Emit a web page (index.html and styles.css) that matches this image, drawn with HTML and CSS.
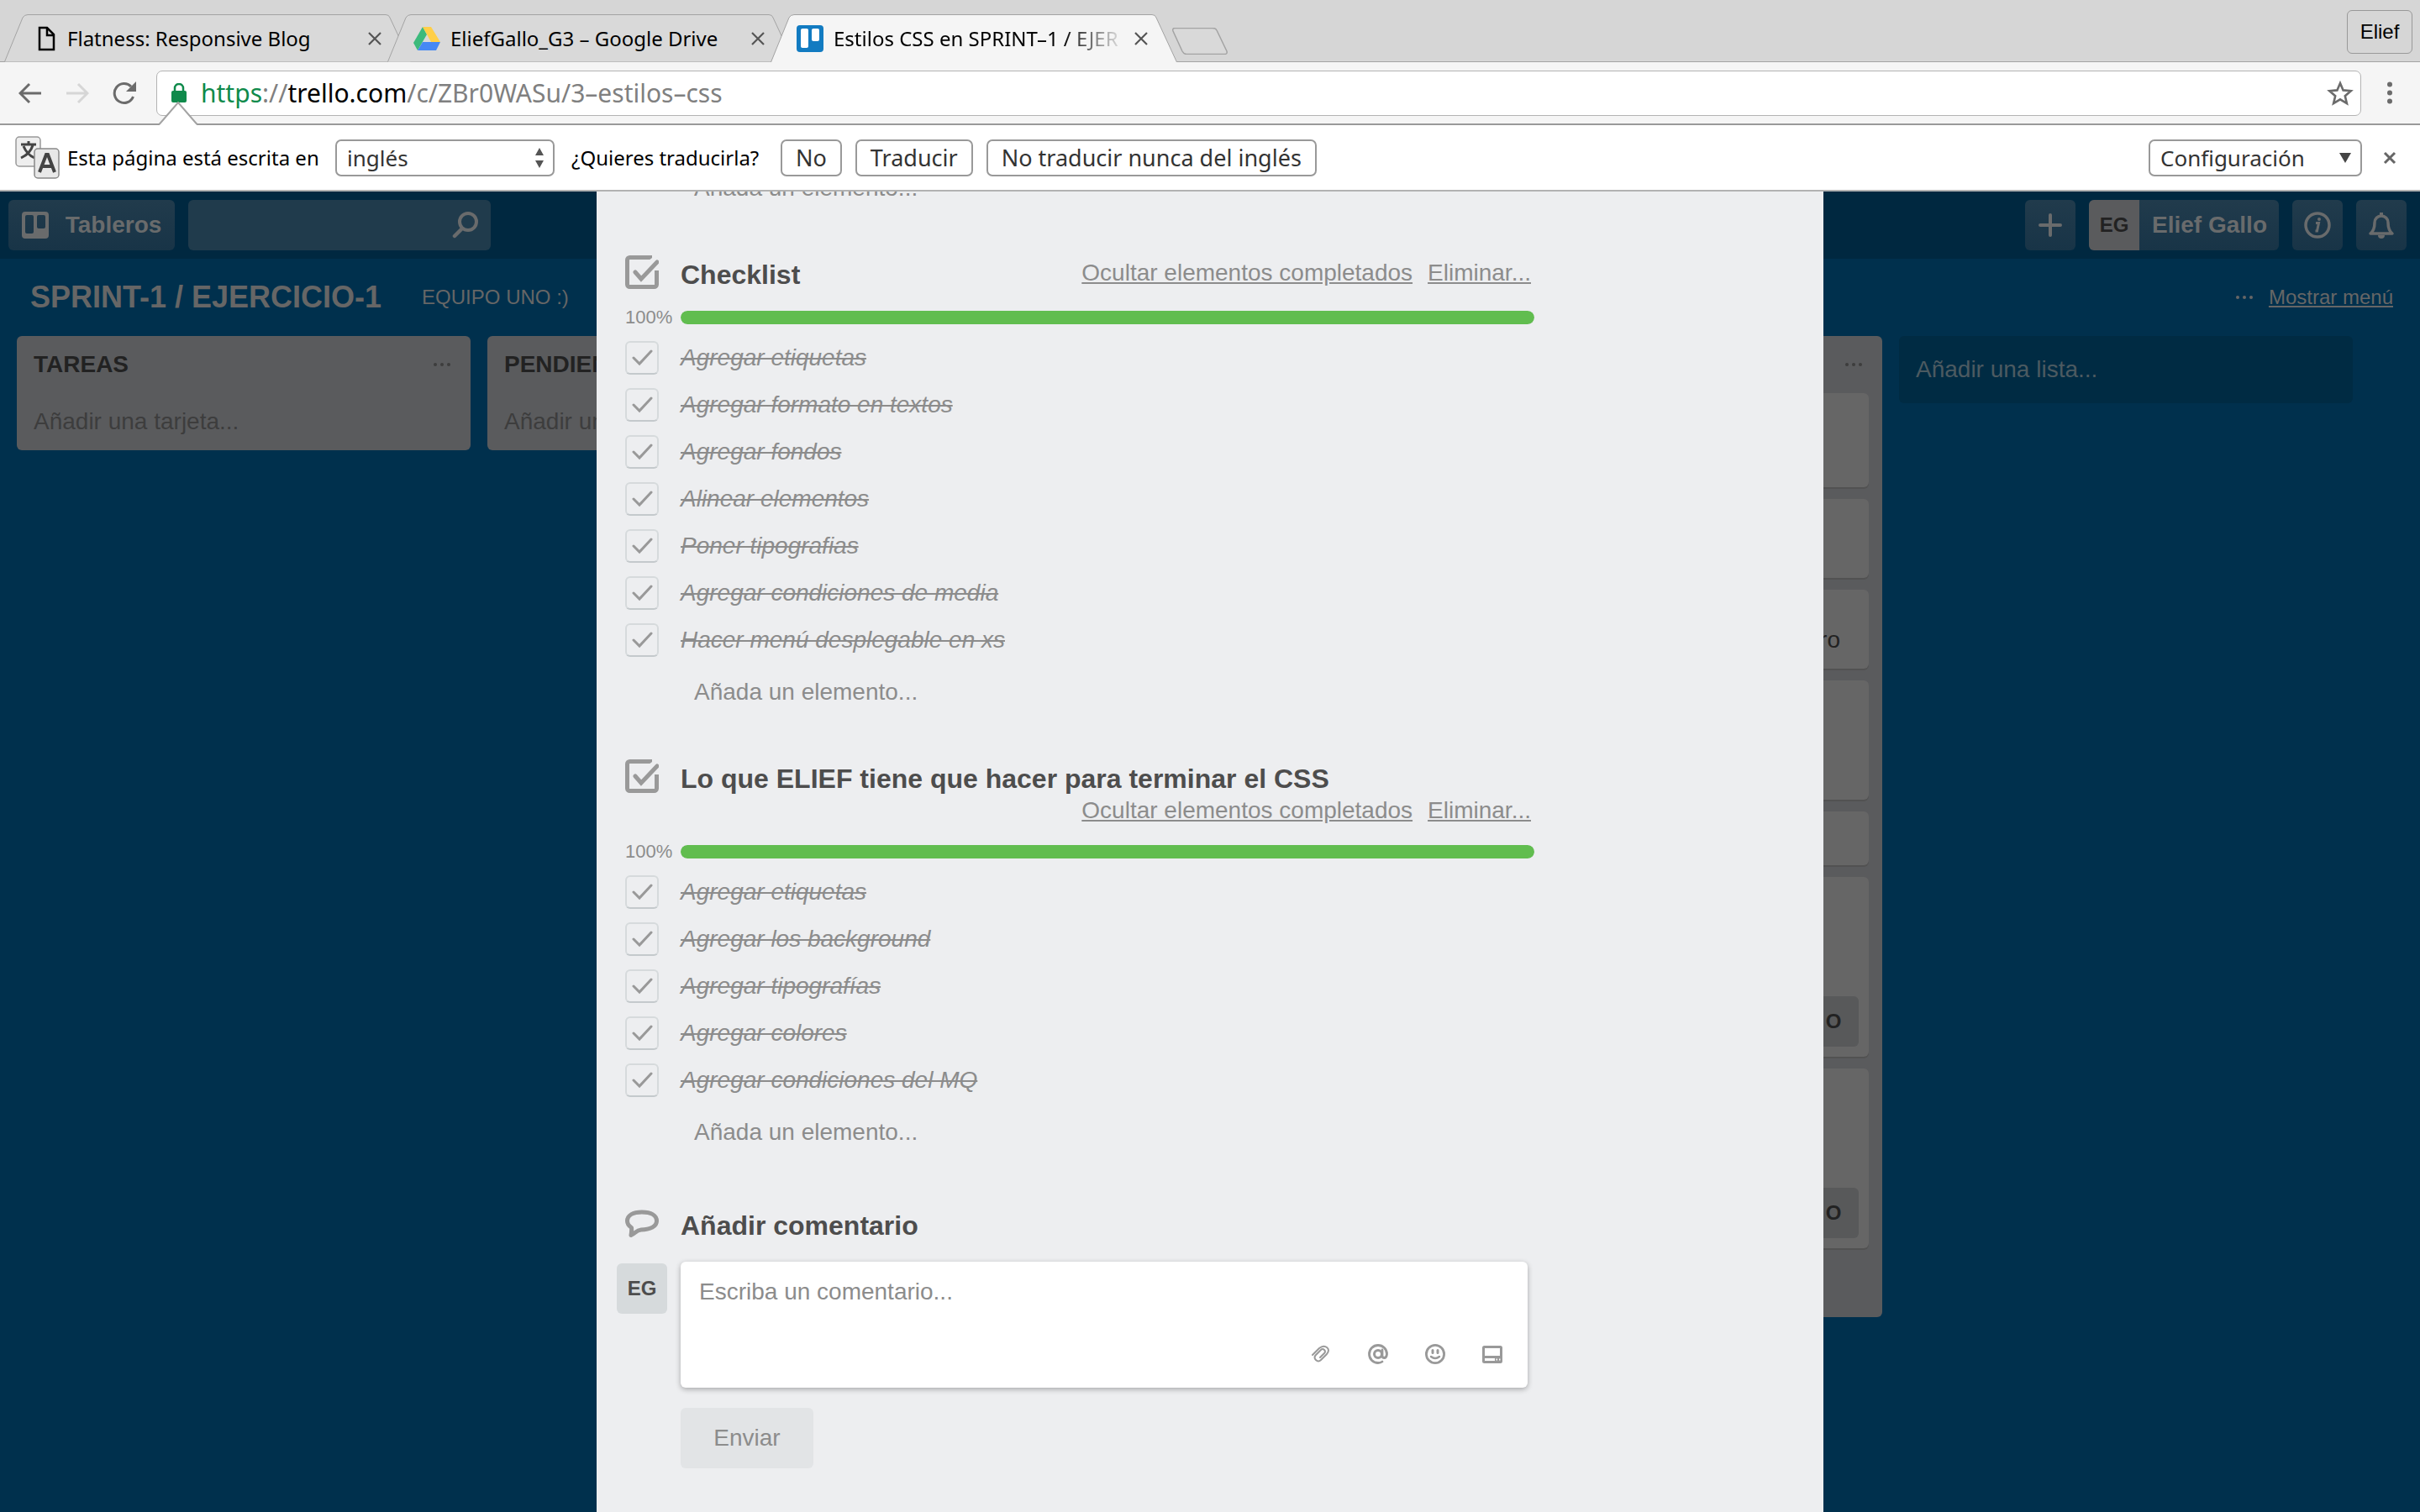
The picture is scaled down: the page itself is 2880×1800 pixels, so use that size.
FILE: index.html
```html
<!DOCTYPE html>
<html lang="es">
<head>
<meta charset="utf-8">
<title>Estilos CSS en SPRINT-1 / EJERCICIO-1</title>
<link rel="stylesheet" href="styles.css">
</head>
<body>
<div class="browser">

  <header class="tabstrip">
    <div class="tabs">
      <div class="tab">
        <svg class="tab__shape" viewBox="0 0 484 57" preserveAspectRatio="none"><path d="M.5 56.500L22 4Q24 .5 28 .5H454Q458 .5 459 4L483.500 56.500" fill="#d9d9d9" stroke="#a3a3a3"/></svg>
        <svg class="tab__icon" viewBox="0 0 32 32"><path d="M12 3h9l8 8v18H12zM21 3v9h8" transform="translate(-1 0)" fill="none" stroke="#000" stroke-width="2.500"/></svg>
        <span class="tab__title">Flatness: Responsive Blog</span>
        <button class="tab__close" aria-label="Cerrar"><svg viewBox="0 0 18 18"><path d="M2 2l14 14M16 2L2 16" stroke="#555" stroke-width="2.200"/></svg></button>
      </div>
      <div class="tab">
        <svg class="tab__shape" viewBox="0 0 484 57" preserveAspectRatio="none"><path d="M.5 56.500L22 4Q24 .5 28 .5H454Q458 .5 459 4L483.500 56.500" fill="#d9d9d9" stroke="#a3a3a3"/></svg>
        <svg class="tab__icon" viewBox="0 0 32 32"><path d="M11 2L0 21l5 9L16 11z" fill="#3cba7c"/><path d="M11 2h10l11 18H21z" fill="#ffcf48"/><path d="M5 30l6-10h21l-5 10z" fill="#4688f4"/></svg>
        <span class="tab__title">EliefGallo_G3 – Google Drive</span>
        <button class="tab__close" aria-label="Cerrar"><svg viewBox="0 0 18 18"><path d="M2 2l14 14M16 2L2 16" stroke="#555" stroke-width="2.200"/></svg></button>
      </div>
      <div class="tab tab--active">
        <svg class="tab__shape" viewBox="0 0 484 57" preserveAspectRatio="none"><path d="M.5 57L22 4Q24 .5 28 .5H454Q458 .5 459 4L483.500 57" fill="#f5f5f5" stroke="#a3a3a3"/></svg>
        <svg class="tab__icon" viewBox="0 0 32 32"><rect width="32" height="32" rx="4" fill="#127bc1"/><rect x="5" y="4" width="9" height="23" rx="2" fill="#fff"/><rect x="18" y="4" width="9" height="15" rx="2" fill="#fff"/></svg>
        <span class="tab__title tab__title--fade">Estilos CSS en SPRINT–1 / EJER</span>
        <button class="tab__close" aria-label="Cerrar"><svg viewBox="0 0 18 18"><path d="M2 2l14 14M16 2L2 16" stroke="#555" stroke-width="2.200"/></svg></button>
      </div>
      <button class="newtab" aria-label="Nueva pestaña"><svg viewBox="0 0 66 32"><path d="M3 .5H48Q52 .5 53 3L65 28Q66 31.500 62 31.500H17Q14 31.500 12 28L1 4Q0 .5 3 .5z" fill="#d9d9d9" stroke="#a3a3a3" stroke-width="1.500"/></svg></button>
    </div>
    <button class="profile">Elief</button>
  </header>

  <nav class="toolbar">
    <button class="nav" aria-label="Atrás"><svg viewBox="0 0 28 28"><path d="M27 14H3M13 3L2 14l11 11" fill="none" stroke="#6b6b6b" stroke-width="3"/></svg></button>
    <button class="nav" aria-label="Adelante"><svg viewBox="0 0 28 28"><path d="M1 14h24M15 3l11 11-11 11" fill="none" stroke="#d6d6d6" stroke-width="3"/></svg></button>
    <button class="nav" aria-label="Recargar"><svg viewBox="0 0 28 28"><path d="M24.500 18A11.500 11.500 0 1 1 22 6" fill="none" stroke="#6b6b6b" stroke-width="3"/><path d="M28 0v12H16z" fill="#6b6b6b"/></svg></button>
    <div class="omnibox">
      <svg class="omnibox__lock" viewBox="0 0 18 24"><rect y="9" width="18" height="14" rx="2" fill="#0f8a4b"/><path d="M4 10V6a5 5 0 0 1 10 0v4" fill="none" stroke="#0f8a4b" stroke-width="2.500"/></svg>
      <span class="omnibox__url"><span class="url-scheme">https</span>://<span class="url-host">trello.com</span>/c/ZBr0WASu/3–estilos–css</span>
      <button class="omnibox__star" aria-label="Marcador"><svg viewBox="0 0 32 32"><path d="M16 4l3.600 8.400 9.100.8-6.900 6 2.100 8.900L16 23.300 8.100 28.100l2.100-8.900-6.900-6 9.100-.8z" fill="none" stroke="#6b6b6b" stroke-width="2.600"/></svg></button>
    </div>
    <button class="nav" aria-label="Menú"><svg viewBox="0 0 28 28"><g fill="#6b6b6b"><circle cx="14" cy="3.500" r="3"/><circle cx="14" cy="13.500" r="3"/><circle cx="14" cy="23.500" r="3"/></g></svg></button>
  </nav>

  <div class="infobar">
    <svg class="infobar__arrow" viewBox="0 0 46 28"><path d="M1 27L23 1l22 26v1H1z" fill="#fff"/><path d="M0 26.500h1L23 1l22 25.500h1" fill="none" stroke="#a3a3a3" stroke-width="2"/></svg>
    <svg class="infobar__icon" viewBox="0 0 54 52"><rect x="1" y="1" width="29" height="35" rx="4" fill="#eee" stroke="#999" stroke-width="1.500"/><path d="M7 10h18M16 6v4M21 11Q18 21 7 26M10 12q4 10 13 14" fill="none" stroke="#444" stroke-width="3"/><rect x="23" y="15" width="29" height="35" rx="4" fill="#e8e8e8" stroke="#888" stroke-width="1.500"/><path d="M29 43l8-21h2l8 21M32 36h12" fill="none" stroke="#444" stroke-width="4"/></svg>
    <label class="infobar__text" for="lang">Esta página está escrita en</label>
    <div class="select select--lang">
      <select id="lang"><option>inglés</option></select>
      <svg class="select__arrow" viewBox="0 0 12 24"><path d="M6 0l5 9H1zM6 24l5-9H1z" fill="#555"/></svg>
    </div>
    <span class="infobar__text infobar__text--ask">¿Quieres traducirla?</span>
    <div class="infobar__actions">
      <button class="pushbtn">No</button>
      <button class="pushbtn">Traducir</button>
      <button class="pushbtn">No traducir nunca del inglés</button>
    </div>
    <div class="select select--config">
      <select aria-label="Configuración"><option>Configuración</option></select>
      <svg class="select__arrow select__arrow--down" viewBox="0 0 16 12"><path d="M1 0h14L8 12z" fill="#444"/></svg>
    </div>
    <button class="infobar__close" aria-label="Cerrar"><svg viewBox="0 0 18 18"><path d="M3 3l12 12M15 3L3 15" stroke="#666" stroke-width="3"/></svg></button>
  </div>

  <div class="page">
    <div class="app">
      <header class="topbar">
        <button class="topbtn topbtn--boards"><svg class="icon32" viewBox="0 0 32 32"><path fill-rule="evenodd" d="M4 0h24a4 4 0 0 1 4 4v24a4 4 0 0 1-4 4H4a4 4 0 0 1-4-4V4a4 4 0 0 1 4-4zM6 4a2 2 0 0 0-2 2v18a2 2 0 0 0 2 2h6a2 2 0 0 0 2-2V6a2 2 0 0 0-2-2zM20 4a2 2 0 0 0-2 2v12a2 2 0 0 0 2 2h6a2 2 0 0 0 2-2V6a2 2 0 0 0-2-2z" fill="#696b6c"/></svg>Tableros</button>
        <div class="search"><input class="search__input" type="text" aria-label="Buscar"><svg class="icon32" viewBox="0 0 32 32"><circle cx="19" cy="12" r="10" fill="none" stroke="#696b6c" stroke-width="4"/><path d="M12 20L3 29" stroke="#696b6c" stroke-width="4.500" stroke-linecap="round"/></svg></div>
        <div class="topbar__right">
          <button class="topbtn topbtn--square" aria-label="Crear"><svg class="icon32" viewBox="0 0 32 32"><path d="M16 4v24M4 16h24" stroke="#696b6c" stroke-width="4" stroke-linecap="round"/></svg></button>
          <button class="topbtn topbtn--member"><span class="topbtn__avatar">EG</span>Elief Gallo</button>
          <button class="topbtn topbtn--square" aria-label="Información"><svg class="icon32" viewBox="0 0 32 32"><circle cx="16" cy="16" r="14" fill="none" stroke="#696b6c" stroke-width="3.500"/><path d="M14 13.500h3.500L15.500 23h-2" fill="none" stroke="#696b6c" stroke-width="3"/><circle cx="18" cy="9" r="2" fill="#696b6c"/></svg></button>
          <button class="topbtn topbtn--square" aria-label="Notificaciones"><svg class="icon32" viewBox="0 0 32 32"><path d="M3 26q5-4 5-13a8 8 0 0 1 16 0q0 9 5 13z" fill="none" stroke="#696b6c" stroke-width="3.500" stroke-linejoin="round"/><path d="M16 5V1" stroke="#696b6c" stroke-width="4"/><path d="M12 28a4 4 0 0 0 8 0z" fill="#696b6c"/></svg></button>
        </div>
      </header>

      <div class="boardbar">
        <h1 class="boardbar__title">SPRINT-1 / EJERCICIO-1</h1>
        <span class="boardbar__team">EQUIPO UNO :)</span>
        <svg class="dots boardbar__dots" viewBox="0 0 22 6"><g fill="#666"><circle cx="3" cy="3" r="2"/><circle cx="11" cy="3" r="2"/><circle cx="19" cy="3" r="2"/></g></svg>
        <a class="boardbar__menu" href="#">Mostrar menú</a>
      </div>

      <div class="lists">
        <section class="list">
          <div class="list__header"><h2 class="list__title">TAREAS</h2><svg class="dots" viewBox="0 0 22 6"><g fill="#3d3d3d"><circle cx="3" cy="3" r="2"/><circle cx="11" cy="3" r="2"/><circle cx="19" cy="3" r="2"/></g></svg></div>
          <a class="list__add" href="#">Añadir una tarjeta...</a>
        </section>
        <section class="list">
          <div class="list__header"><h2 class="list__title">PENDIENTES</h2></div>
          <a class="list__add" href="#">Añadir una tarjeta...</a>
        </section>
        <section class="list"></section>
        <section class="list">
          <div class="list__header"><h2 class="list__title"></h2><svg class="dots" viewBox="0 0 22 6"><g fill="#3d3d3d"><circle cx="3" cy="3" r="2"/><circle cx="11" cy="3" r="2"/><circle cx="19" cy="3" r="2"/></g></svg></div>
          <div class="cards">
            <article class="card card--112"></article>
            <article class="card card--94"></article>
            <article class="card card--94"><span class="card__text">ro</span></article>
            <article class="card card--142"></article>
            <article class="card card--64"></article>
            <article class="card card--214"><span class="card__member">O</span></article>
            <article class="card card--214"><span class="card__member">O</span></article>
          </div>
          <div class="list__foot"></div>
        </section>
        <button class="addlist">Añadir una lista...</button>
      </div>
    </div>

    <div class="overlay">
      <main class="window">
        <div class="window__main">
          <section class="checklist checklist--scrolled">
            <a class="checklist__add" href="#">Añada un elemento...</a>
          </section>

          <section class="checklist">
            <div class="block-head">
              <svg class="block-head__icon" viewBox="0 0 40 40"><path d="M32 2.500H5.500a3 3 0 0 0-3 3v29a3 3 0 0 0 3 3h29a3 3 0 0 0 3-3V19" fill="none" stroke="#999" stroke-width="5"/><path d="M28 6L36 0h4v16l-5 7V8z" fill="#edeef0"/><path d="M37.500 18v8" stroke="#999" stroke-width="5"/><path d="M12 20l7 8L38 8" fill="none" stroke="#999" stroke-width="5" stroke-linecap="round"/></svg>
              <div class="block-head__row">
                <h2 class="block-head__title">Checklist</h2>
                <div class="block-head__links"><a href="#">Ocultar elementos completados</a><a href="#">Eliminar...</a></div>
              </div>
            </div>
            <div class="progress"><span class="progress__pct">100%</span><div class="progress__track"><div class="progress__fill" style="width:100%"></div></div></div>
            <ul class="items">
              <li><label class="item"><input type="checkbox" checked><span>Agregar etiquetas</span></label></li>
              <li><label class="item"><input type="checkbox" checked><span>Agregar formato en textos</span></label></li>
              <li><label class="item"><input type="checkbox" checked><span>Agregar fondos</span></label></li>
              <li><label class="item"><input type="checkbox" checked><span>Alinear elementos</span></label></li>
              <li><label class="item"><input type="checkbox" checked><span>Poner tipografias</span></label></li>
              <li><label class="item"><input type="checkbox" checked><span>Agregar condiciones de media</span></label></li>
              <li><label class="item"><input type="checkbox" checked><span>Hacer menú desplegable en xs</span></label></li>
            </ul>
            <a class="checklist__add" href="#">Añada un elemento...</a>
          </section>

          <section class="checklist">
            <div class="block-head">
              <svg class="block-head__icon" viewBox="0 0 40 40"><path d="M32 2.500H5.500a3 3 0 0 0-3 3v29a3 3 0 0 0 3 3h29a3 3 0 0 0 3-3V19" fill="none" stroke="#999" stroke-width="5"/><path d="M28 6L36 0h4v16l-5 7V8z" fill="#edeef0"/><path d="M37.500 18v8" stroke="#999" stroke-width="5"/><path d="M12 20l7 8L38 8" fill="none" stroke="#999" stroke-width="5" stroke-linecap="round"/></svg>
              <div class="block-head__row">
                <h2 class="block-head__title">Lo que ELIEF tiene que hacer para terminar el CSS</h2>
                <div class="block-head__links"><a href="#">Ocultar elementos completados</a><a href="#">Eliminar...</a></div>
              </div>
            </div>
            <div class="progress"><span class="progress__pct">100%</span><div class="progress__track"><div class="progress__fill" style="width:100%"></div></div></div>
            <ul class="items">
              <li><label class="item"><input type="checkbox" checked><span>Agregar etiquetas</span></label></li>
              <li><label class="item"><input type="checkbox" checked><span>Agregar los background</span></label></li>
              <li><label class="item"><input type="checkbox" checked><span>Agregar tipografías</span></label></li>
              <li><label class="item"><input type="checkbox" checked><span>Agregar colores</span></label></li>
              <li><label class="item"><input type="checkbox" checked><span>Agregar condiciones del MQ</span></label></li>
            </ul>
            <a class="checklist__add" href="#">Añada un elemento...</a>
          </section>

          <section class="comments">
            <div class="block-head">
              <svg class="block-head__icon" viewBox="0 -2 40 40"><path d="M20 5C9 5 2.500 9 2.500 15.500c0 4 2 6 5 8 .5 3 0 6-.5 9 5-2 6-6 12-6.500C30 26 37.500 22 37.500 15.500 37.500 9 31 5 20 5z" fill="none" stroke="#999" stroke-width="5" stroke-linejoin="round"/></svg>
              <div class="block-head__row"><h2 class="block-head__title"><label for="comment">Añadir comentario</label></h2></div>
            </div>
            <div class="comment">
              <span class="comment__avatar">EG</span>
              <div class="comment__frame">
                <textarea id="comment" class="comment__input" placeholder="Escriba un comentario..."></textarea>
                <div class="comment__tools">
                  <button aria-label="Adjuntar"><svg viewBox="0 0 24 24"><path d="M2 13L10 5q5-4 9-1t0 8l-7 7q-3 3-6 0t0-6l6-6q2-2 4 0t0 4l-5 5" fill="none" stroke="#999" stroke-width="2" stroke-linecap="round"/></svg></button>
                  <button aria-label="Mencionar"><svg viewBox="0 0 24 24"><circle cx="12" cy="12" r="4.500" fill="none" stroke="#999" stroke-width="3"/><path d="M17 7v7q0 2.500 2.500 2.500T22.500 12A10.500 10.500 0 1 0 12 22.500q3 0 5-1.500" fill="none" stroke="#999" stroke-width="2.800" stroke-linecap="round"/></svg></button>
                  <button aria-label="Emoji"><svg viewBox="0 0 24 24"><circle cx="12" cy="12" r="10.600" fill="none" stroke="#999" stroke-width="2.800"/><path d="M9 7.500v3M15 7.500v3" stroke="#999" stroke-width="3" stroke-linecap="round"/><path d="M7 15q5 4 10 0" fill="none" stroke="#999" stroke-width="2.500" stroke-linecap="round"/></svg></button>
                  <button aria-label="Tarjeta"><svg viewBox="0 0 24 24"><path fill-rule="evenodd" d="M2.500 2h19A2.500 2.500 0 0 1 24 4.500v16a2.500 2.500 0 0 1-2.500 2.500h-19A2.500 2.500 0 0 1 0 20.500v-16A2.500 2.500 0 0 1 2.500 2zM3 5v9h18V5zM3 17v3h12v-3zM16.500 17.500v2H18v-2zM20 17.500v2h1.500v-2z" fill="#999"/></svg></button>
                </div>
              </div>
            </div>
            <button class="send">Enviar</button>
          </section>
        </div>
      </main>
    </div>
  </div>
</div>
</body>
</html>
```
FILE: styles.css
```css
* { box-sizing: border-box; }
body { margin: 0; font: 28px/32px "Liberation Sans", Arial, sans-serif; color: #4d4d4d; }
button, input, textarea, select { font: inherit; color: inherit; margin: 0; padding: 0; border: 0; background: none; }
h1, h2, ul { margin: 0; padding: 0; font-size: inherit; }
svg { display: block; flex: none; }
a { color: inherit; }

.browser { display: flex; flex-direction: column; height: 100vh; overflow: hidden; }

/* Tab strip */
.tabstrip { display: flex; justify-content: space-between; height: 74px; padding: 0 9px 0 5px; background: #d6d6d6; box-shadow: inset 0 -1px #a3a3a3; font: 24px/32px "Noto Sans", sans-serif; color: #000; }
.tabs { display: flex; align-items: flex-end; }
.tab { position: relative; display: flex; align-items: center; width: 484px; height: 57px; margin-right: -28px; padding: 0 34px 0 31px; }
.tab--active { z-index: 1; }
.tab__shape { position: absolute; inset: 0; width: 100%; height: 100%; }
.tab__icon { position: relative; width: 32px; height: 32px; margin-right: 12px; }
.tab__title { position: relative; flex: 1; white-space: nowrap; }
.tab__title--fade { -webkit-mask-image: linear-gradient(to right, #000 78%, transparent); mask-image: linear-gradient(to right, #000 78%, transparent); }
.tab__close { position: relative; width: 18px; height: 18px; margin-left: 9px; }
.tab__close svg, .infobar__close svg { width: 18px; height: 18px; }
.newtab { align-self: center; margin: 24px 0 0 22px; }
.newtab svg { width: 66px; height: 32px; }
.profile { width: 78px; height: 52px; margin-top: 12px; border: 1px solid #999; border-radius: 6px; font-family: "Liberation Sans", Arial, sans-serif; }

/* Toolbar */
.toolbar { display: flex; align-items: center; gap: 28px; height: 73px; padding: 0 22px; background: #f5f5f5; }
.nav svg { width: 28px; height: 28px; }
.omnibox { display: flex; flex: 1; align-items: center; height: 54px; margin: 0 -8px 0 -4px; padding: 0 8px 0 17px; border: 1px solid #b3b3b3; border-radius: 7px; background: #fff; font: 30px/40px "Noto Sans", sans-serif; color: #808080; }
.omnibox__lock { width: 18px; height: 24px; margin-right: 17px; }
.omnibox__url { flex: 1; }
.omnibox__star svg { width: 32px; height: 32px; }
.url-scheme { color: #0f8a4b; }
.url-host { color: #000; }

/* Translate bar */
.infobar { position: relative; display: flex; align-items: center; height: 81px; padding: 0 27px 0 18px; border-top: 2px solid #999; border-bottom: 2px solid #b2b2b2; background: #fff; font: 24px/32px "Noto Sans", sans-serif; color: #000; white-space: nowrap; }
.infobar__arrow { position: absolute; left: 189px; top: -28px; width: 46px; height: 28px; }
.infobar__icon { width: 54px; height: 52px; margin-right: 8px; }
.infobar__text { width: 319px; }
.infobar__text--ask { width: 249px; margin-left: 20px; }
.infobar__actions { display: flex; flex: 1; gap: 16px; }
.infobar__close { margin-left: 24px; }
.pushbtn { height: 44px; padding: 0 16px; border: 2px solid #999; border-radius: 7px; background: #fff; color: #333; font-size: 27px; }
.select { position: relative; color: #333; font-size: 26px; }
.select select { width: 100%; height: 44px; padding: 0 12px; border: 2px solid #999; border-radius: 7px; background: #fff; appearance: none; }
.select--lang { width: 261px; }
.select--config { width: 254px; }
.select__arrow { position: absolute; right: 12px; top: 10px; width: 12px; height: 24px; pointer-events: none; }
.select__arrow--down { top: 16px; width: 16px; height: 12px; }

/* Board under the overlay */
.page { display: grid; flex: 1; grid-template-columns: 100%; min-height: 0; overflow: hidden; background: #00304d; }
.app, .overlay { grid-area: 1 / 1; min-width: 0; }
.topbar { display: flex; gap: 16px; padding: 10px 16px 10px 10px; background: #002840; }
.topbar__right { display: flex; gap: 16px; margin-left: auto; }
.topbtn { display: flex; align-items: center; justify-content: center; height: 60px; border-radius: 6px; overflow: hidden; background: linear-gradient(#213b4c, #183447); color: #696b6c; font-weight: 700; }
.topbtn--boards { gap: 20px; width: 198px; }
.topbtn--square { width: 60px; }
.topbtn--member { padding-right: 14px; }
.topbtn__avatar { width: 60px; margin-right: 15px; background: #5a5b5d; color: #222; font-size: 24px; line-height: 60px; }
.icon32 { width: 32px; height: 32px; }
.search { display: flex; align-items: center; width: 360px; padding-right: 14px; border-radius: 6px; background: #203b4c; }
.search__input { flex: 1; min-width: 0; }
.boardbar { display: flex; align-items: center; height: 92px; padding: 0 32px 0 36px; color: #666; font-size: 24px; }
.boardbar__title { font-size: 36px; line-height: 40px; }
.boardbar__team { margin-left: 48px; }
.boardbar__dots { margin-left: auto; margin-right: 18px; }
.dots { width: 22px; height: 6px; }
.lists { display: flex; gap: 20px; align-items: flex-start; padding: 0 20px; }
.list { flex: none; width: 540px; border-radius: 6px; background: #5a5b5d; }
.list__header { display: flex; align-items: center; justify-content: space-between; min-height: 54px; padding: 16px 23px 2px 20px; }
.list__title { color: #222; line-height: 36px; }
.list__add { display: block; padding: 30px 20px 16px; color: #3d3d3d; line-height: 36px; text-decoration: none; }
.list__foot { height: 82px; }
.cards { display: flex; flex-direction: column; gap: 14px; padding: 14px 16px 0; }
.card { display: flex; flex-direction: column; align-items: flex-end; justify-content: flex-end; padding: 12px; border-radius: 6px; background: #666; box-shadow: 0 2px #525252; color: #222; }
.card--64 { min-height: 64px; }
.card--94 { min-height: 94px; }
.card--112 { min-height: 112px; }
.card--142 { min-height: 142px; }
.card--214 { min-height: 214px; }
.card__text { padding: 0 22px 6px 0; }
.card__member { width: 60px; border-radius: 6px; background: #58595a; font-size: 24px; font-weight: 700; line-height: 60px; text-align: center; }
.addlist { flex: none; width: 540px; height: 80px; padding: 0 20px; border-radius: 6px; background: #002b43; color: #4c5a61; text-align: left; }

/* Card window */
.overlay { display: flex; justify-content: center; min-height: 0; }
.window { width: 1460px; padding: 0 24px; background: #edeef0; }
.window__main { max-width: 1092px; }
.checklist { margin-bottom: 64px; padding-left: 10px; color: #8c8c8c; }
.checklist--scrolled .checklist__add { margin-top: -20px; }
.checklist__add { display: block; margin: 26px 0 0 82px; text-decoration: none; }
.block-head { display: flex; }
.block-head__icon { width: 40px; height: 40px; margin-right: 26px; }
.block-head__row { display: flex; flex: 1; flex-wrap: wrap; gap: 2px 16px; align-items: flex-start; padding: 4px 4px 0 0; }
.block-head__title { color: #4d4d4d; font-size: 32px; line-height: 38px; }
.block-head__links { display: flex; gap: 18px; margin-left: auto; line-height: 34px; }
.progress { display: flex; align-items: center; height: 16px; margin: 24px 0 20px; }
.progress__pct { width: 66px; font-size: 22px; line-height: 16px; }
.progress__track { flex: 1; height: 16px; border-radius: 8px; overflow: hidden; background: #d6dadc; }
.progress__fill { height: 100%; border-radius: 8px; background: #61bd4f; }
.items { display: flex; flex-direction: column; gap: 16px; list-style: none; }
.item { display: flex; gap: 26px; align-items: center; font-style: italic; text-decoration: line-through; text-decoration-thickness: 2px; }
.item input { width: 40px; height: 40px; border: 2px solid #d6dadc; border-bottom-color: #c4c9cc; border-radius: 6px; appearance: none; }
.item input:checked { background: url("data:image/svg+xml,%3Csvg xmlns='http://www.w3.org/2000/svg' viewBox='0 0 36 36'%3E%3Cpath d='M8 18l7 7L29 10' fill='none' stroke='%23999' stroke-width='3' stroke-linecap='round'/%3E%3C/svg%3E") center / 36px 36px no-repeat; }

.comments { margin-top: 72px; }
.comments .block-head { padding-left: 10px; }
.comment { display: flex; gap: 16px; margin: 24px 8px 24px 0; }
.comment__avatar { width: 60px; height: 60px; margin-top: 2px; border-radius: 6px; background: #d6dadc; font-size: 24px; font-weight: 700; line-height: 60px; text-align: center; }
.comment__frame { flex: 1; padding: 18px 20px; border-radius: 6px; background: #fff; box-shadow: 0 2px 6px rgba(0, 0, 0, .3); }
.comment__input { display: block; width: 100%; height: 70px; padding: 0 2px; line-height: 36px; resize: none; outline: 0; }
.comment__input::placeholder { color: #8c8c8c; opacity: 1; }
.comment__tools { display: flex; gap: 24px; justify-content: flex-end; }
.comment__tools button { display: grid; place-items: center; width: 44px; height: 44px; }
.comment__tools svg { width: 24px; height: 24px; }
.send { width: 158px; height: 72px; margin-left: 76px; border-radius: 6px; background: #e2e4e6; color: #8c8c8c; }
```
